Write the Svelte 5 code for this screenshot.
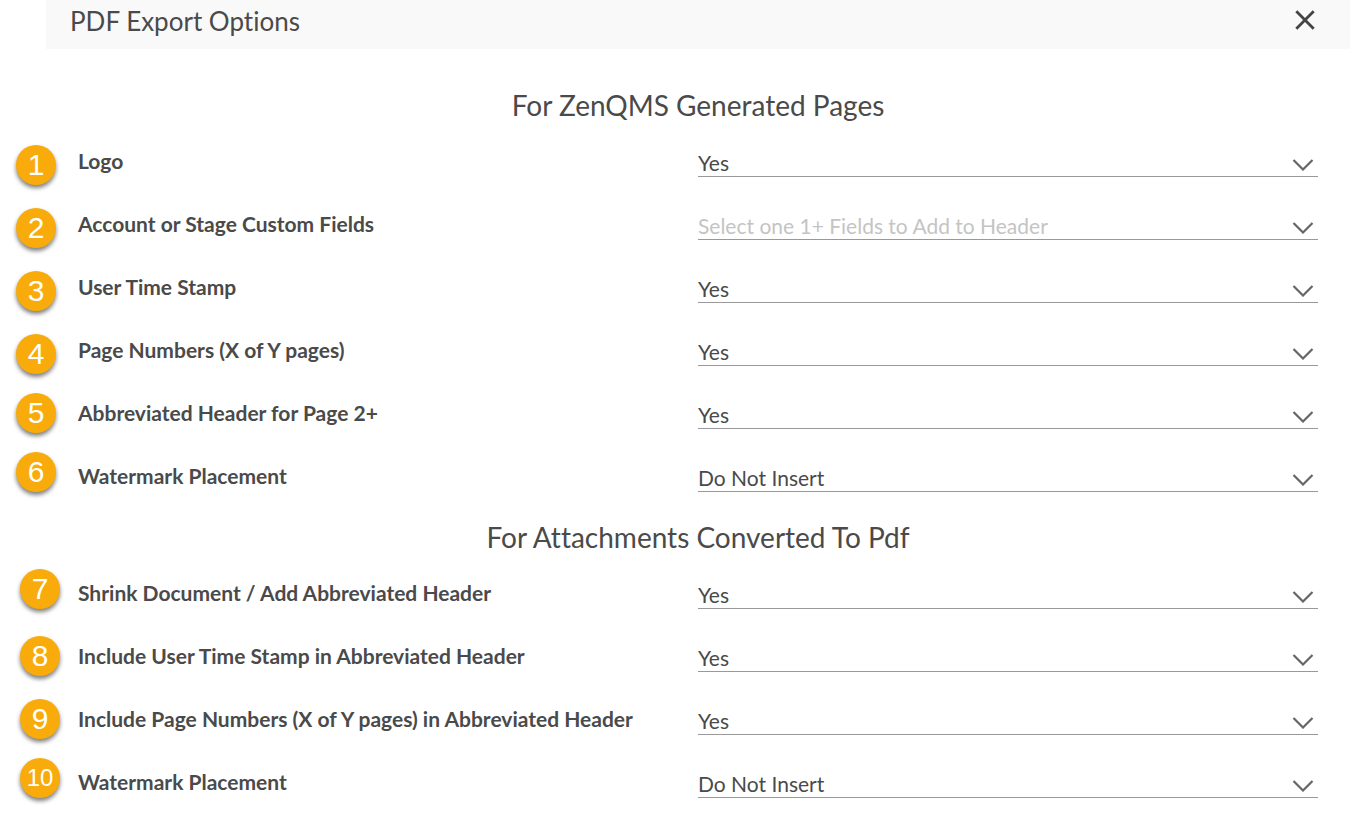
<script lang="ts">
	type Option = {
		num: number;
		id: string;
		label: string;
		choices: string[];
		value: string;
		placeholder?: string;
		marker: "start" | "center" | "end";
	};

	const yesNo = ["Yes", "No"];
	const placements = ["Do Not Insert", "Header", "Footer"];

	let sections: { name: string; title: string; options: Option[] }[] = $state([
		{
			name: "generated",
			title: "For ZenQMS Generated Pages",
			options: [
				{ num: 1, id: "logo", label: "Logo", choices: yesNo, value: "Yes", marker: "end" },
				{
					num: 2,
					id: "custom-fields",
					label: "Account or Stage Custom Fields",
					choices: [],
					value: "",
					placeholder: "Select one 1+ Fields to Add to Header",
					marker: "end"
				},
				{ num: 3, id: "time-stamp", label: "User Time Stamp", choices: yesNo, value: "Yes", marker: "end" },
				{ num: 4, id: "page-numbers", label: "Page Numbers (X of Y pages)", choices: yesNo, value: "Yes", marker: "end" },
				{ num: 5, id: "short-header", label: "Abbreviated Header for Page 2+", choices: yesNo, value: "Yes", marker: "center" },
				{ num: 6, id: "watermark", label: "Watermark Placement", choices: placements, value: "Do Not Insert", marker: "start" }
			]
		},
		{
			name: "attachments",
			title: "For Attachments Converted To Pdf",
			options: [
				{ num: 7, id: "shrink", label: "Shrink Document / Add Abbreviated Header", choices: yesNo, value: "Yes", marker: "start" },
				{ num: 8, id: "att-time-stamp", label: "Include User Time Stamp in Abbreviated Header", choices: yesNo, value: "Yes", marker: "center" },
				{ num: 9, id: "att-page-numbers", label: "Include Page Numbers (X of Y pages) in Abbreviated Header", choices: yesNo, value: "Yes", marker: "center" },
				{ num: 10, id: "att-watermark", label: "Watermark Placement", choices: placements, value: "Do Not Insert", marker: "start" }
			]
		}
	]);

	let open = $state(true);
</script>

{#if open}
	<div class="dialog" role="dialog" aria-labelledby="title">
		<header>
			<h1 id="title">PDF Export Options</h1>
			<button type="button" aria-label="Close" onclick={() => (open = false)}>
				<svg width="20" height="20" viewBox="0 0 20 20">
					<path d="M1.3 1.3 18.7 18.7M18.7 1.3 1.3 18.7" />
				</svg>
			</button>
		</header>

		{#each sections as section}
			<section class={section.name}>
				<h2>{section.title}</h2>
				{#each section.options as option}
					<div class="row">
						<div class="marker {option.marker}">
							<span class="badge" class:wide={option.num > 9}>{option.num}</span>
						</div>
						<label for={option.id}>{option.label}</label>
						<div class="field">
							<select id={option.id} class:empty={option.value === ""} bind:value={option.value}>
								{#if option.placeholder}
									<option value="">{option.placeholder}</option>
								{/if}
								{#each option.choices as choice}
									<option>{choice}</option>
								{/each}
							</select>
							<svg width="22" height="12" viewBox="0 0 22 12">
								<path d="M1.5 1 11 10.5 20.5 1" />
							</svg>
						</div>
					</div>
				{/each}
			</section>
		{/each}
	</div>
{/if}

<style>
	:global(body) {
		margin: 0;
		background: #fff;
	}

	.dialog {
		font-family: Lato, "Open Sans", sans-serif;
		font-variant-ligatures: none;
		color: #4a4a4a;
		padding-bottom: 20px;
	}

	header {
		display: flex;
		justify-content: space-between;
		align-items: center;
		height: 42px;
		margin: 0 0 26px 46px;
		padding: 0 33px 7px 24px;
		background: #f9f9f9;
	}

	h1 {
		margin: 0;
		font-size: 26px;
		font-weight: 400;
		line-height: 36px;
	}

	header button {
		display: flex;
		padding: 0 2px 2px;
		border: none;
		background: none;
		cursor: pointer;
	}

	svg {
		fill: none;
		stroke: #666;
		stroke-width: 2.2;
	}

	header svg {
		stroke: #444;
		stroke-width: 2.8;
	}

	h2 {
		margin: 0 0 0 46px;
		padding: 12px 0 6px;
		font-size: 28px;
		font-weight: 400;
		line-height: 36px;
		text-align: center;
	}

	.row {
		display: grid;
		grid-template-columns: 78px 1fr 1fr;
		align-items: center;
		height: 63px;
		padding-right: 32px;
	}

	.marker {
		display: flex;
		height: 48px;
		padding-left: 16px;
	}

	.attachments .marker {
		padding-left: 20px;
	}

	.start {
		align-items: flex-start;
	}

	.center {
		align-items: center;
	}

	.end {
		align-items: flex-end;
	}

	.badge {
		width: 40px;
		height: 40px;
		border-radius: 50%;
		background: #f8ab0a;
		box-shadow: 0 3px 4px rgba(0, 0, 0, 0.5);
		color: #fff;
		font-family: "Liberation Sans", Arial, sans-serif;
		font-size: 30px;
		line-height: 40px;
		text-align: center;
	}

	.badge.wide {
		font-size: 24px;
	}

	label {
		font-size: 21px;
		font-weight: 700;
		line-height: 28px;
	}

	.field {
		display: grid;
		align-items: center;
		padding-top: 4px;
		border-bottom: 1px solid #999;
	}

	.field > * {
		grid-area: 1 / 1;
	}

	.field svg {
		justify-self: end;
		margin: 6px 4px 0 0;
		pointer-events: none;
	}

	select {
		width: 100%;
		height: 28px;
		padding: 0;
		border: none;
		border-radius: 0;
		background: none;
		color: inherit;
		font-family: inherit;
		font-size: 21px;
		font-variant-ligatures: inherit;
		appearance: none;
		cursor: pointer;
	}

	select.empty {
		color: #c4c4c4;
	}
</style>
